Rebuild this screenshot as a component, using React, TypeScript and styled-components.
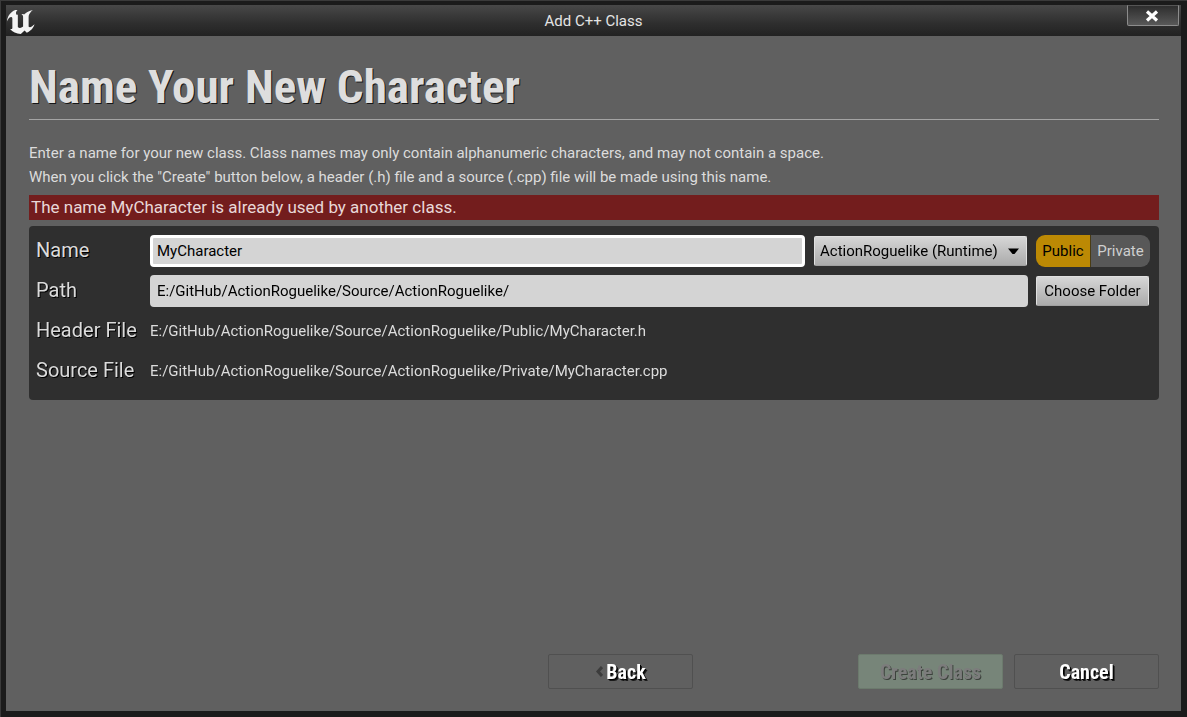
import React, { useState } from "react";
import styled, { createGlobalStyle, css } from "styled-components";

const GlobalStyle = createGlobalStyle`
  *, *::before, *::after { box-sizing: border-box; }
  body {
    margin: 0;
    background: #1b1b1b;
    font-family: Roboto, "Liberation Sans", sans-serif;
    font-size: 15px;
    color: #dcdcdc;
  }
  button, input, select { font: inherit; margin: 0; }
`;

const condensed = css`
  font-family: "Roboto Condensed", "Liberation Sans Narrow", Roboto, sans-serif;
  font-weight: 700;
`;

const Window = styled.div`
  display: flex;
  flex-direction: column;
  min-height: 100vh;
  padding: 4px 6px 6px 5px;
  background: #1b1b1b;
  border-top: 1px solid #3a3a3a;
  border-left: 1px solid #3a3a3a;
`;

const TitleBar = styled.header`
  display: grid;
  grid-template-columns: 1fr auto 1fr;
  align-items: start;
  height: 31px;
  background: linear-gradient(#484848, #2e2e2e 60%, #222222);
`;

const Logo = styled.svg`
  width: 28px;
  height: 24px;
  margin: 5px 0 0 1px;
  fill: #f4f4f4;
`;

const WindowTitle = styled.div`
  line-height: 32px;
  color: #e4e4e4;
`;

const CloseButton = styled.button`
  justify-self: end;
  display: flex;
  align-items: center;
  justify-content: center;
  width: 52px;
  height: 21px;
  margin-right: 2px;
  padding: 0 2px 0 0;
  border: 1px solid #8c8c8c;
  border-top-color: #555;
  border-radius: 0 0 2px 2px;
  background: linear-gradient(#2e2e2e, #585858);
`;

const Content = styled.main`
  flex: 1;
  display: flex;
  flex-direction: column;
  padding: 23px 22px 22px 23px;
  background: #606060;
`;

const Heading = styled.h1`
  ${condensed}
  margin: 0;
  padding-bottom: 4px;
  border-bottom: 1px solid #a4a4a4;
  font-size: 47px;
  line-height: 56px;
  color: #dedede;
  text-shadow: 1px 1px 0 #161616;
`;

const Description = styled.p`
  margin: 21px 0 6px;
  line-height: 24px;
`;

const ErrorBanner = styled.div`
  padding: 0 2px;
  background: #731d1d;
  color: #e8d8d8;
  font-size: 17px;
  line-height: 25px;
`;

const Form = styled.form`
  margin-top: 6px;
  padding: 5px 9px 9px 7px;
  border-radius: 4px;
  background: #2f2f2f;
`;

const Row = styled.div`
  display: grid;
  grid-template-columns: 106px minmax(0, 1fr) 114px;
  column-gap: 8px;
  align-items: center;
  height: 40px;
`;

const labelStyle = css`
  height: 40px;
  font-size: 20px;
  line-height: 38px;
  text-shadow: 1px 1px 0 #000;
`;

const FieldLabel = styled.label`
  ${labelStyle}
`;

const FieldName = styled.span`
  ${labelStyle}
`;

const Field = styled.div`
  display: flex;
  gap: 9px;
  align-items: center;
  min-width: 0;
`;

const TextInput = styled.input`
  flex: 1;
  min-width: 0;
  height: 32px;
  padding: 0 4px;
  border: 3px solid #d4d4d4;
  border-radius: 4px;
  background: #d4d4d4;
  color: #000;
  outline: none;
  &:focus { border-color: #fff; }
`;

const raised = css`
  height: 30px;
  border: 1px solid #e0e0e0;
  border-bottom-color: #a0a0a0;
  border-radius: 2px;
  background: linear-gradient(#d6d6d6, #ababab);
  color: #000;
`;

const SelectBox = styled.div`
  position: relative;
  width: 214px;
  padding-right: 1px;
  svg {
    position: absolute;
    right: 9px;
    top: 12px;
    pointer-events: none;
  }
`;

const ModuleSelect = styled.select`
  ${raised}
  display: block;
  appearance: none;
  width: 100%;
  padding: 0 5px;
`;

const FolderButton = styled.button`
  ${raised}
  margin-right: 1px;
  padding: 0;
`;

const Toggle = styled.fieldset`
  display: flex;
  min-width: 0;
  height: 32px;
  margin: 0;
  padding: 0;
  border: 0;
  border-radius: 9px;
  overflow: hidden;
`;

const ToggleOption = styled.label<{ $on: boolean }>`
  position: relative;
  flex: 1 1 auto;
  line-height: 32px;
  text-align: center;
  background: ${(p) => (p.$on ? "#bc8904" : "#585858")};
  color: ${(p) => (p.$on ? "#000" : "#cfcfcf")};
  &:first-of-type { border-right: 1px solid #4a3c14; }
  input {
    position: absolute;
    inset: 0;
    margin: 0;
    opacity: 0;
  }
`;

const Footer = styled.footer`
  display: flex;
  justify-content: flex-end;
  gap: 11px;
  margin-top: auto;
`;

const WizardButton = styled.button<{ $back?: boolean }>`
  ${condensed}
  display: flex;
  align-items: center;
  justify-content: center;
  gap: 3px;
  width: 145px;
  height: 35px;
  margin-right: ${(p) => (p.$back ? "154px" : "0")};
  padding: 0;
  border: 1px solid #505050;
  border-radius: 2px;
  background: #606060;
  color: #fff;
  font-size: 20px;
  text-shadow: 1px 1px 0 #000, 2px 2px 0 #1a1a1a;
  &:disabled {
    border-color: #6c7a6d;
    background: #778579;
    color: #7c7c7c;
    text-shadow: 1px 1px 0 #3c423c;
  }
`;

export default function App() {
  const [name, setName] = useState("MyCharacter");
  const [path, setPath] = useState("E:/GitHub/ActionRoguelike/Source/ActionRoguelike/");
  const [visibility, setVisibility] = useState("Public");

  return (
    <>
      <GlobalStyle />
      <Window>
        <TitleBar>
          <Logo viewBox="4.6 5.3 14.8 14.1" preserveAspectRatio="none" aria-hidden="true">
            <path d="M19.13 13.729c-.206.997-1.126 3.557-4.06 4.942l-1.179-1.325-1.988 2a7.338 7.338 0 01-5.804-2.978 2.859 2.859 0 00.65.123c.326.006.678-.114.678-.66v-5.394a.89.89 0 00-1.116-.89c-.92.212-1.656 2.509-1.656 2.509a7.304 7.304 0 012.528-5.597 7.408 7.408 0 013.73-1.721c-1.006.573-1.57 1.507-1.57 2.29 0 1.262.76 1.109.984.923v7.28a1.157 1.157 0 00.148.256 1.075 1.075 0 00.88.445c.76 0 1.747-.868 1.747-.868V9.172c0-.6-.452-1.324-.905-1.572 0 0 .838-.149 1.484.346a5.537 5.537 0 01.387-.425c1.508-1.48 2.929-1.902 4.112-2.112 0 0-2.151 1.69-2.151 3.96 0 1.687.043 5.801.043 5.801.799.771 1.986-.342 3.059-1.441z" />
          </Logo>
          <WindowTitle>Add C++ Class</WindowTitle>
          <CloseButton type="button" aria-label="Close">
            <svg width="14" height="12" viewBox="0 0 14 12" aria-hidden="true">
              <path d="M2 1.5 12 10.5M12 1.5 2 10.5" stroke="#fff" strokeWidth="3.2" />
            </svg>
          </CloseButton>
        </TitleBar>
        <Content>
          <Heading>Name Your New Character</Heading>
          <Description>
            Enter a name for your new class. Class names may only contain alphanumeric characters, and may not contain a space.
            <br />
            When you click the "Create" button below, a header (.h) file and a source (.cpp) file will be made using this name.
          </Description>
          <ErrorBanner role="alert">The name MyCharacter is already used by another class.</ErrorBanner>
          <Form id="class-form" onSubmit={(e) => e.preventDefault()}>
            <Row>
              <FieldLabel htmlFor="name">Name</FieldLabel>
              <Field>
                <TextInput id="name" autoFocus value={name} onChange={(e) => setName(e.target.value)} />
                <SelectBox>
                  <ModuleSelect aria-label="Module">
                    <option>ActionRoguelike (Runtime)</option>
                  </ModuleSelect>
                  <svg width="11" height="7" viewBox="0 0 11 7" aria-hidden="true">
                    <path d="M0 .5h11L6.500 6h-2z" fill="#000" />
                  </svg>
                </SelectBox>
              </Field>
              <Toggle aria-label="Class visibility">
                {["Public", "Private"].map((option) => (
                  <ToggleOption key={option} $on={visibility === option}>
                    <input
                      type="radio"
                      name="visibility"
                      checked={visibility === option}
                      onChange={() => setVisibility(option)}
                    />
                    {option}
                  </ToggleOption>
                ))}
              </Toggle>
            </Row>
            <Row>
              <FieldLabel htmlFor="path">Path</FieldLabel>
              <Field>
                <TextInput id="path" value={path} onChange={(e) => setPath(e.target.value)} />
              </Field>
              <FolderButton type="button">Choose Folder</FolderButton>
            </Row>
            <Row>
              <FieldName>Header File</FieldName>
              <Field>E:/GitHub/ActionRoguelike/Source/ActionRoguelike/Public/MyCharacter.h</Field>
            </Row>
            <Row>
              <FieldName>Source File</FieldName>
              <Field>E:/GitHub/ActionRoguelike/Source/ActionRoguelike/Private/MyCharacter.cpp</Field>
            </Row>
          </Form>
          <Footer>
            <WizardButton type="button" $back>
              <svg width="8" height="11" viewBox="0 0 8 11" aria-hidden="true">
                <path d="M7 1 3 5.500 7 10" fill="none" stroke="#3c3c3c" strokeWidth="3" />
              </svg>
              Back
            </WizardButton>
            <WizardButton type="submit" form="class-form" disabled>Create Class</WizardButton>
            <WizardButton type="button">Cancel</WizardButton>
          </Footer>
        </Content>
      </Window>
    </>
  );
}
